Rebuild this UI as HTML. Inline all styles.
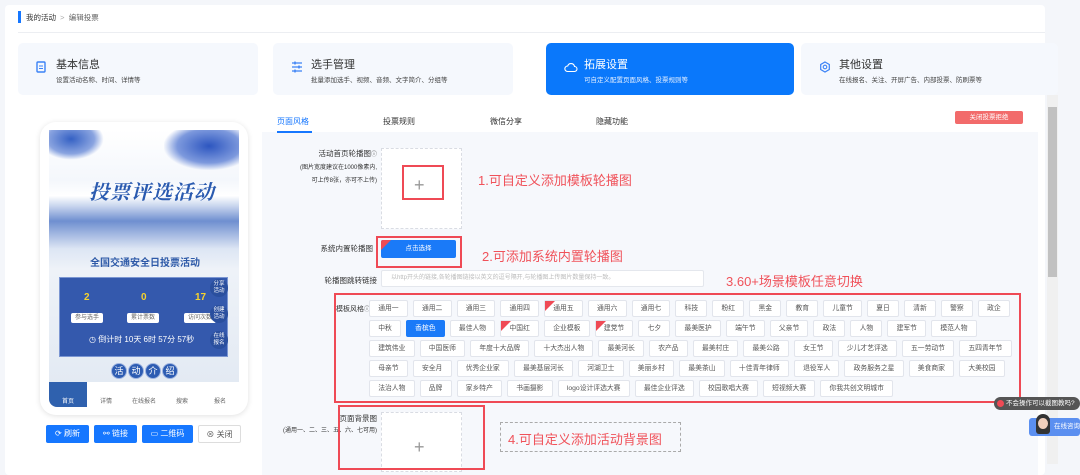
<!DOCTYPE html>
<html><head><meta charset="utf-8"><style>
*{margin:0;padding:0;box-sizing:border-box}
body{width:1080px;height:464px;overflow:hidden;background:#f4f6fa;font-family:"Liberation Sans","Noto Sans CJK SC",sans-serif;color:#333;position:relative}
.abs{position:absolute}
.white{left:5px;top:5px;width:1040px;height:470px;background:#fff;border-radius:4px}
.card{top:43px;height:52px;background:#f5f8fd;border-radius:5px}
.card .t{position:absolute;left:38px;top:13px;font-size:11px;color:#333}
.card .s{position:absolute;left:38px;top:31px;font-size:6.5px;color:#444}
.card svg{position:absolute;left:18px;top:18px}
.panel{left:262px;top:105px;width:776px;height:370px;background:#f6f8fc}
.tab{top:116px;font-size:8px;color:#333}
.lbl{font-size:7.5px;color:#333;text-align:right}
.red{color:#f0525a;font-size:13px}
.rbox{border:2px solid #ef4a55}
.row{position:absolute;left:369px;display:flex;gap:5px}
.tag{height:17px;line-height:16px;font-size:6.8px;padding:0 8.2px;border:1px solid #e2e5ec;background:#fff;color:#555;border-radius:2px;position:relative;white-space:nowrap}
.tag.on{background:#1a7af8;color:#fff;border-color:#1a7af8}
.hot:before{content:"";position:absolute;left:0;top:0;border-top:10px solid #ef4a55;border-right:10px solid transparent}
.btn{top:425px;height:18px;font-size:8px;line-height:18px;color:#fff;background:#1677ff;text-align:center;border-radius:2px}
</style></head><body>
<div class="abs white"></div>
<div class="abs" style="left:18px;top:11px;width:3px;height:12px;background:#1677ff"></div>
<div class="abs" style="left:26px;top:12px;font-size:7.5px;color:#333">我的活动 <span style="color:#aaa">&nbsp;&gt;&nbsp;</span> <span style="color:#666">编辑投票</span></div>
<div class="abs" style="left:18px;top:32px;width:1027px;height:1px;background:#eceef2"></div>

<div class="abs card" style="left:18px;width:240px"><svg width="10" height="12"><rect x="1" y="1" width="8" height="10" rx="1" fill="none" stroke="#3b82f6" stroke-width="1.4"/><path d="M3 5h4M3 7.5h4" stroke="#3b82f6"/></svg><div class="t">基本信息</div><div class="s">设置活动名称、时间、详情等</div></div>
<div class="abs card" style="left:273px;width:240px"><svg width="12" height="12"><path d="M1 2h10M1 6h10M1 10h10" stroke="#3b82f6" stroke-width="1.2"/><path d="M4 0.5v3M8 4.5v3M4 8.5v3" stroke="#3b82f6" stroke-width="1.4"/></svg><div class="t">选手管理</div><div class="s">批量添加选手、视频、音频、文字简介、分组等</div></div>
<div class="abs card" style="left:546px;width:248px;background:#0a78fb"><svg width="14" height="12"><path d="M3.5 10.5h7a2.5 2.5 0 0 0 0-5 3.5 3.5 0 0 0-6.8-0.5A2.7 2.7 0 0 0 3.5 10.5z" fill="none" stroke="#fff" stroke-width="1.1"/></svg><div class="t" style="color:#fff">拓展设置</div><div class="s" style="color:#e6f0ff">可自定义配置页面风格、投票规则等</div></div>
<div class="abs card" style="left:801px;width:257px"><svg width="12" height="12"><path d="M6 1l4.3 2.5v5L6 11 1.7 8.5v-5z" fill="none" stroke="#3b82f6" stroke-width="1.2"/><circle cx="6" cy="6" r="1.8" fill="none" stroke="#3b82f6" stroke-width="1.1"/></svg><div class="t">其他设置</div><div class="s">在线报名、关注、开屏广告、内部投票、防刷票等</div></div>

<div class="abs" style="left:1047px;top:95px;width:11px;height:369px;background:#f0f0f0"></div>
<div class="abs" style="left:1048px;top:107px;width:9px;height:170px;background:#c1c1c1"></div>

<!-- phone -->
<div class="abs" style="left:40px;top:122px;width:208px;height:293px;background:#fff;border-radius:16px;box-shadow:0 1px 6px rgba(0,0,0,.12)"></div>
<div class="abs" style="left:49px;top:130px;width:190px;height:253px;background:linear-gradient(#fff 0,#f4f7fc 20%,#fff 26%,#c9d6ee 30%,#6f8fd0 36%,#dde6f4 47%,#eef2f8 55%,#e3eaf3 100%);overflow:hidden">
 <div class="abs" style="left:0;top:0;width:55px;height:30px;background:radial-gradient(ellipse at 40% 30%,#3561c4,#8aa4e0 50%,transparent 70%)"></div>
 <div class="abs" style="left:115px;top:0;width:75px;height:40px;background:radial-gradient(ellipse at 60% 40%,#2d56c0,#7d99dd 50%,transparent 72%)"></div>
 <div class="abs" style="left:40px;top:46px;font-size:20px;font-style:italic;font-weight:bold;color:#2b5bb0;font-family:'Noto Serif CJK SC',serif;letter-spacing:1px">投票评选活动</div>
 <div class="abs" style="left:41px;top:124px;font-size:10px;font-weight:bold;color:#2e5aa8">全国交通安全日投票活动</div>
</div>
<div class="abs" style="left:59px;top:277px;width:169px;height:80px;background:#3459ad;border:1px solid #7b96d2"></div>
<div class="abs" style="left:84px;top:292px;font-size:10px;font-weight:bold;color:#f7d32c">2</div>
<div class="abs" style="left:141px;top:292px;font-size:10px;font-weight:bold;color:#f7d32c">0</div>
<div class="abs" style="left:195px;top:292px;font-size:10px;font-weight:bold;color:#f7d32c">17</div>
<div class="abs" style="left:71px;top:313px;width:32px;height:10px;background:#fff;border-radius:2px;font-size:6px;color:#666;text-align:center;line-height:10px">参与选手</div>
<div class="abs" style="left:127px;top:313px;width:32px;height:10px;background:#fff;border-radius:2px;font-size:6px;color:#666;text-align:center;line-height:10px">累计票数</div>
<div class="abs" style="left:184px;top:313px;width:32px;height:10px;background:#fff;border-radius:2px;font-size:6px;color:#666;text-align:center;line-height:10px">访问次数</div>
<div class="abs" style="left:89px;top:334px;font-size:8px;color:#fff">◷ 倒计时 10天 6时 57分 57秒</div>
<div class="abs" style="left:210px;top:279px;width:18px;height:18px;border-radius:50%;background:#2a4f9e;color:#fff;font-size:5.5px;text-align:center;line-height:7px;padding-top:2px">分享<br>活动</div>
<div class="abs" style="left:210px;top:305px;width:18px;height:18px;border-radius:50%;background:#2a4f9e;color:#fff;font-size:5.5px;text-align:center;line-height:7px;padding-top:2px">创建<br>活动</div>
<div class="abs" style="left:210px;top:331px;width:18px;height:18px;border-radius:50%;background:#2a4f9e;color:#fff;font-size:5.5px;text-align:center;line-height:7px;padding-top:2px">在线<br>报名</div>
<div class="abs" style="left:111px;top:363px;display:flex;gap:1px">
 <div style="width:16px;height:16px;border-radius:50%;background:#2d5cb2;border:1px solid #9fb4e0;color:#fff;font-size:9px;text-align:center;line-height:14px">活</div>
 <div style="width:16px;height:16px;border-radius:50%;background:#2d5cb2;border:1px solid #9fb4e0;color:#fff;font-size:9px;text-align:center;line-height:14px">动</div>
 <div style="width:16px;height:16px;border-radius:50%;background:#2d5cb2;border:1px solid #9fb4e0;color:#fff;font-size:9px;text-align:center;line-height:14px">介</div>
 <div style="width:16px;height:16px;border-radius:50%;background:#2d5cb2;border:1px solid #9fb4e0;color:#fff;font-size:9px;text-align:center;line-height:14px">绍</div>
</div>
<div class="abs" style="left:49px;top:382px;width:190px;height:25px;background:#fff;display:flex;font-size:6px;color:#666;text-align:center">
 <div style="width:38px;background:#2f61ae;color:#fff;border-radius:0 0 0 8px;padding-top:14px">首页</div>
 <div style="width:38px;padding-top:14px">详情</div>
 <div style="width:38px;padding-top:14px">在线报名</div>
 <div style="width:38px;padding-top:14px">搜索</div>
 <div style="width:38px;padding-top:14px">报名</div>
</div>
<div class="abs btn" style="left:46px;width:43px">⟳ 刷新</div>
<div class="abs btn" style="left:94px;width:43px">⚯ 链接</div>
<div class="abs btn" style="left:142px;width:51px">▭ 二维码</div>
<div class="abs btn" style="left:198px;width:43px;background:#fff;color:#555;border:1px solid #ddd">⊗ 关闭</div>

<!-- right panel -->
<div class="abs panel"></div>
<div class="abs" style="left:262px;top:105px;width:776px;height:27px;background:#fff"></div>
<div class="abs tab" style="left:277px;color:#1677ff">页面风格</div>
<div class="abs" style="left:277px;top:131px;width:35px;height:2px;background:#1677ff"></div>
<div class="abs tab" style="left:383px">投票规则</div>
<div class="abs tab" style="left:490px">微信分享</div>
<div class="abs tab" style="left:596px">隐藏功能</div>
<div class="abs" style="left:955px;top:111px;width:68px;height:13px;background:#f26b6b;color:#fff;font-size:6.5px;text-align:center;line-height:13px;border-radius:2px">关闭投票拒绝</div>

<div class="abs lbl" style="left:262px;top:148px;width:115px;line-height:11px">活动首页轮播图<span style="font-size:6px">ⓘ</span><br><span style="font-size:6px">(图片宽度建议在1000像素内,<br>可上传8张，亦可不上传)</span></div>
<div class="abs" style="left:381px;top:148px;width:81px;height:81px;border:1px dashed #d9dce3;background:#fff"></div>
<div class="abs rbox" style="left:402px;top:165px;width:42px;height:35px"></div>
<div class="abs" style="left:414px;top:176px;font-size:18px;color:#999;line-height:18px;font-weight:300">+</div>
<div class="abs red" style="left:478px;top:170px">1.可自定义添加模板轮播图</div>

<div class="abs lbl" style="left:262px;top:243px;width:111px">系统内置轮播图</div>
<div class="abs rbox" style="left:376px;top:236px;width:86px;height:32px"></div>
<div class="abs" style="left:381px;top:240px;width:75px;height:18px;background:#1a7af8;border-radius:2px;color:#fff;font-size:6.5px;text-align:center;line-height:18px;overflow:hidden">点击选择<div class="abs" style="left:0;top:0;border-top:10px solid #ef4a55;border-right:10px solid transparent"></div></div>
<div class="abs red" style="left:482px;top:246px">2.可添加系统内置轮播图</div>

<div class="abs lbl" style="left:262px;top:275px;width:115px">轮播图跳转链接</div>
<div class="abs" style="left:381px;top:270px;width:323px;height:17px;background:#fff;border:1px solid #e4e7ed;border-radius:2px;font-size:6px;color:#bbb;line-height:15px;padding-left:9px">以http开头的链接,各轮播图链接以英文的逗号隔开,与轮播图上传图片数量保持一致。</div>
<div class="abs red" style="left:726px;top:271px">3.60+场景模板任意切换</div>

<div class="abs rbox" style="left:334px;top:293px;width:687px;height:110px"></div>
<div class="abs lbl" style="left:336px;top:304px;text-align:left;font-size:7px">模板风格<span style="font-size:6px">ⓘ</span></div>
<div class="row" style="top:300px"><span class="tag">通用一</span><span class="tag">通用二</span><span class="tag">通用三</span><span class="tag">通用四</span><span class="tag hot">通用五</span><span class="tag">通用六</span><span class="tag">通用七</span><span class="tag">科技</span><span class="tag">粉红</span><span class="tag">黑金</span><span class="tag">教育</span><span class="tag">儿童节</span><span class="tag">夏日</span><span class="tag">清新</span><span class="tag">警察</span><span class="tag">政企</span></div>
<div class="row" style="top:320px"><span class="tag">中秋</span><span class="tag on">香槟色</span><span class="tag">最佳人物</span><span class="tag hot">中国红</span><span class="tag">企业模板</span><span class="tag hot">建党节</span><span class="tag">七夕</span><span class="tag">最美医护</span><span class="tag">端午节</span><span class="tag">父亲节</span><span class="tag">政法</span><span class="tag">人物</span><span class="tag">建军节</span><span class="tag">模范人物</span></div>
<div class="row" style="top:340px"><span class="tag">建筑伟业</span><span class="tag">中国医师</span><span class="tag">年度十大品牌</span><span class="tag">十大杰出人物</span><span class="tag">最美河长</span><span class="tag">农产品</span><span class="tag">最美村庄</span><span class="tag">最美公路</span><span class="tag">女王节</span><span class="tag">少儿才艺评选</span><span class="tag">五一劳动节</span><span class="tag">五四青年节</span></div>
<div class="row" style="top:360px"><span class="tag">母亲节</span><span class="tag">安全月</span><span class="tag">优秀企业家</span><span class="tag">最美基层河长</span><span class="tag">河湖卫士</span><span class="tag">美丽乡村</span><span class="tag">最美茶山</span><span class="tag">十佳青年律师</span><span class="tag">退役军人</span><span class="tag">政务服务之星</span><span class="tag">美食商家</span><span class="tag">大美校园</span></div>
<div class="row" style="top:380px"><span class="tag">法治人物</span><span class="tag">品牌</span><span class="tag">家乡特产</span><span class="tag">书画摄影</span><span class="tag">logo设计评选大赛</span><span class="tag">最佳企业评选</span><span class="tag">校园歌唱大赛</span><span class="tag">短视频大赛</span><span class="tag">你我共创文明城市</span></div>

<div class="abs lbl" style="left:262px;top:413px;width:115px;line-height:11px">页面背景图<br><span style="font-size:6px">(通用一、二、三、五、六、七可用)</span></div>
<div class="abs" style="left:381px;top:412px;width:81px;height:60px;border:1px dashed #d9dce3;background:#fff"></div>
<div class="abs rbox" style="left:338px;top:405px;width:147px;height:65px"></div>
<div class="abs" style="left:414px;top:438px;font-size:18px;color:#999;line-height:18px">+</div>
<div class="abs" style="left:500px;top:422px;width:181px;height:30px;border:1px dashed #aaa"></div>
<div class="abs red" style="left:508px;top:429px">4.可自定义添加活动背景图</div>

<div class="abs" style="left:994px;top:397px;width:86px;height:13px;background:#555;border-radius:7px;color:#fff;font-size:6.5px;line-height:13px;padding-left:12px;white-space:nowrap;overflow:hidden">不会操作可以截图教吗?</div>
<div class="abs" style="left:997px;top:400px;width:7px;height:7px;border-radius:50%;background:#ef4a55"></div>
<div class="abs" style="left:1029px;top:418px;width:51px;height:18px;background:#5b8ff0;border-radius:3px;color:#fff;font-size:6.5px;line-height:18px;padding-left:25px;white-space:nowrap;overflow:hidden">在线咨询</div>
<div class="abs" style="left:1036px;top:414px;width:14px;height:20px;border-radius:7px 7px 3px 3px;background:#333"></div>
<div class="abs" style="left:1038px;top:418px;width:10px;height:11px;border-radius:50%;background:#f2d0bc"></div>
</body></html>
